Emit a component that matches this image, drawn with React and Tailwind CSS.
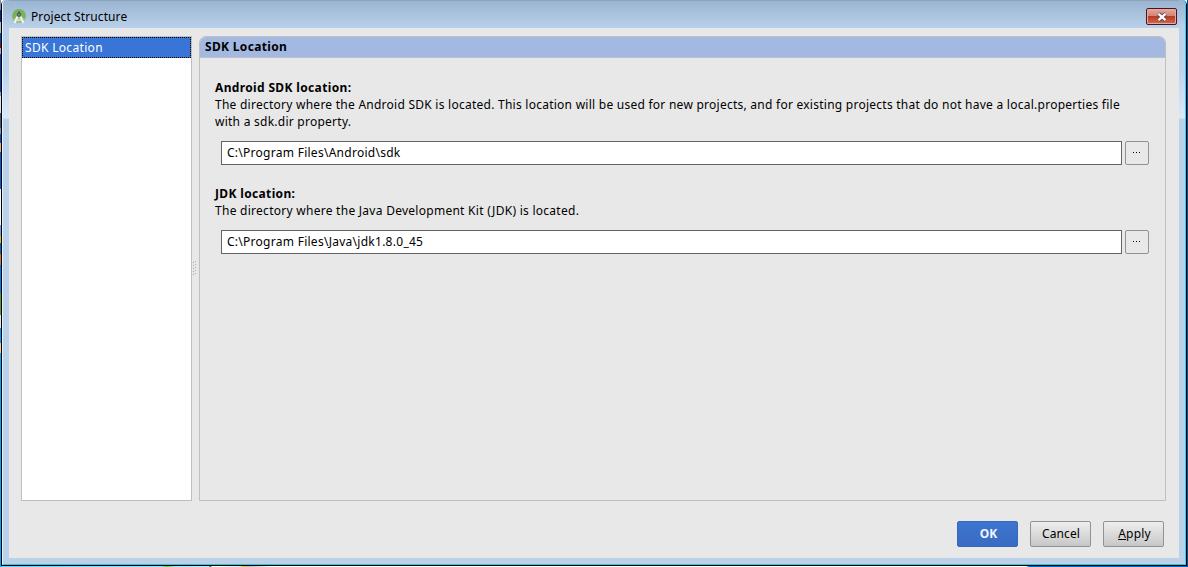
import React from "react";

const strip = [
  [0, 10, "#7d8fae"], [10, 22, "#0a2a80"], [22, 33, "#a9bbdc"], [33, 44, "#0648b8"], [44, 48, "#8a1010"], [48, 54, "#b9a0b8"],
  [54, 92, "#003fae"], [92, 96, "#8fa0c0"], [96, 104, "#d8e4f4"], [104, 113, "#cfe4fa"], [113, 128, "#445a78"], [128, 134, "#7f94b0"], [134, 143, "#0050c8"],
  [143, 152, "#e9a880"], [152, 189, "#0060d8"], [189, 225, "#f4f8ff"], [225, 236, "#6f9fe0"], [236, 243, "#f0b820"], [243, 254, "#0068c8"],
  [254, 265, "#c87848"], [265, 293, "#0080f0"], [293, 315, "#5aa030"], [315, 328, "#d8e8e8"], [328, 343, "#00a0ff"], [343, 353, "#f8cc90"], [353, 567, "#00aaff"],
];

function AppIcon() {
  return (
    <svg width="14" height="16" viewBox="0 0 14 16" className="shrink-0">
      <circle cx="7" cy="7" r="6.9" fill="#78b259" />
      <path d="M.8 10a6.900 6.900 0 0 0 12.400 0L7 7z" fill="#9dc48a" />
      <path d="M6 6.500 2.500 14M8 6.500l3.500 7.500" stroke="#f4f6f4" strokeWidth="1.900" fill="none" />
      <path d="M3.500 10.300q3.500 1.700 7 0" stroke="#e4ece2" strokeWidth="1.200" fill="none" />
      <path d="M7 2.200v2" stroke="#48604f" strokeWidth="1.600" />
      <circle cx="7" cy="5.700" r="2.300" fill="#4b6354" />
      <circle cx="7" cy="5.800" r="0.700" fill="#a9bcae" />
    </svg>
  );
}

function LocationField({ title, value, children }) {
  return (
    <section>
      <h2 className="text-[12px] leading-[17px] font-bold tracking-[0.35px]">{title}</h2>
      <div className="leading-[17px] tracking-[0.252px] whitespace-nowrap">{children}</div>
      <div className="mt-[11px] ml-[6px] flex gap-[3px]">
        <div className="flex h-6 w-[901px] items-center border border-[#646464] bg-white pb-px pl-[5px] tracking-[0.27px]">{value}</div>
        <button className="flex h-6 w-6 items-center justify-center rounded-[2px] border border-[#929292] bg-[#e8e8e8]">
          <svg width="7" height="1" className="mr-px mb-[2px]"><path d="M0 .5h1M3 .5h1M6 .5h1" stroke="#000" /></svg>
        </button>
      </div>
    </section>
  );
}

export default function App() {
  return (
    <div className="flex h-[567px] w-[1188px] overflow-hidden font-['Noto_Sans','Open_Sans',sans-serif] text-[12px] text-black">
      <div className="w-px shrink-0">
        {strip.map(([a, b, c]) => <div key={a} style={{ height: b - a, background: c }} />)}
      </div>
      <div className="flex w-[1186px] flex-col">
        <div className="flex h-[566px] flex-col rounded-t-[5px] border-x border-b border-black bg-[#bad1ea]">
          <div className="flex h-[565px] flex-col rounded-t-[4px] border-r border-b border-l border-r-[#42cbe6] border-b-[#2fc5df] border-l-[#e8f3fb] bg-[linear-gradient(to_bottom,#9ab3cf_0px,#b9d1ea_28px,#bdd4ed_70px,#dce8f6_118px,#bad1ea_119px)] px-[6px] pb-[6px]">
            <header className="flex h-7 items-center border-t border-[#8ba5c0]">
              <div className="mt-[5px] ml-[3px] flex gap-[5px]">
                <AppIcon />
                <span className="leading-4 tracking-[0.1px]">Project Structure</span>
              </div>
              <button className="mt-[4px] mr-[2px] ml-auto flex h-[17px] w-[31px] items-center justify-center rounded-[2px] border border-[#471523] bg-[linear-gradient(#e5a69d_0%,#d48377_46%,#b83b25_50%,#cf6b51_100%)] shadow-[inset_0_0_0_1px_#e7aaa0]">
                <svg width="12" height="10" viewBox="0 0 12 10"><path d="M2.500 1.800 9.500 8.200M9.500 1.800 2.500 8.200" stroke="#554450" strokeWidth="4" /><path d="M2.500 1.800 9.500 8.200M9.500 1.800 2.500 8.200" stroke="#fff" strokeWidth="2.300" /></svg>
              </button>
            </header>
            <main className="flex h-[530px] flex-col bg-[#e8e8e8] pt-2 pr-[13px] pl-3">
              <div className="flex h-[465px]">
                <nav className="w-[171px] border border-[#bfbfbf] bg-white">
                  <div className="h-[21px] border border-dotted border-black bg-[#3875d7] pl-[2px] leading-[19px] tracking-[0.32px] text-white">SDK Location</div>
                </nav>
                <div className="flex w-[7px] items-center pl-px">
                  <svg width="4" height="15"><path d="M0 1h1M2 0h1M0 4h1M2 3h1M0 7h1M2 6h1M0 10h1M2 9h1M0 13h1M2 12h1" stroke="#aaa" transform="translate(0 .5)" /></svg>
                </div>
                <div className="w-[967px] rounded-t-[7px] border border-[#bfbfbf]">
                  <h1 className="h-[21px] rounded-t-[6px] border-b border-[#bdc3cf] bg-[#a4b9e1] pl-[5px] text-[12px] leading-[19px] font-bold tracking-[0.33px]">SDK Location</h1>
                  <div className="flex flex-col gap-5 pt-[21px] pl-[15px]">
                    <LocationField title="Android SDK location:" value="C:\Program Files\Android\sdk">
                      <p>The directory where the Android SDK is located. This location will be used for new projects, and for existing projects that do not have a local.properties file</p>
                      <p>with a sdk.dir property.</p>
                    </LocationField>
                    <LocationField title="JDK location:" value="C:\Program Files\Java\jdk1.8.0_45">
                      <p className="tracking-[0.27px]">The directory where the Java Development Kit (JDK) is located.</p>
                    </LocationField>
                  </div>
                </div>
              </div>
              <footer className="mt-5 flex justify-end gap-3 pr-[2px]">
                <button className="h-[26px] w-[61px] rounded-[2px] border border-[#3868bd] bg-[linear-gradient(#3c75d0,#3a6bc2)] pl-[2px] font-bold text-[#f0f4fb]">OK</button>
                <button className="h-[26px] w-[61px] rounded-[2px] border border-[#929292] bg-[linear-gradient(#eeeeee,#c7c7c7)] pl-px tracking-[0.1px]">Cancel</button>
                <button className="h-[26px] w-[61px] rounded-[2px] border border-[#929292] bg-[linear-gradient(#eeeeee,#c7c7c7)] pl-[2px] tracking-[0.2px]"><span className="underline">A</span>pply</button>
              </footer>
            </main>
          </div>
        </div>
        <div className="h-px shrink-0 bg-[linear-gradient(to_right,#58d0ff_0px,#8be4ff_160px,#72c838_166px,#a3ebff_175px,#b2eeff_208px,#202020_209px,#ffffff_211px,#e0e8f4_239px,#f1c52e_242px,#c0b8b0_248px,#ffffff_270px,#ffffff_1025px,#0068d0_1028px)]" />
      </div>
      <div className="w-px shrink-0 bg-[#064b9c]" />
    </div>
  );
}
